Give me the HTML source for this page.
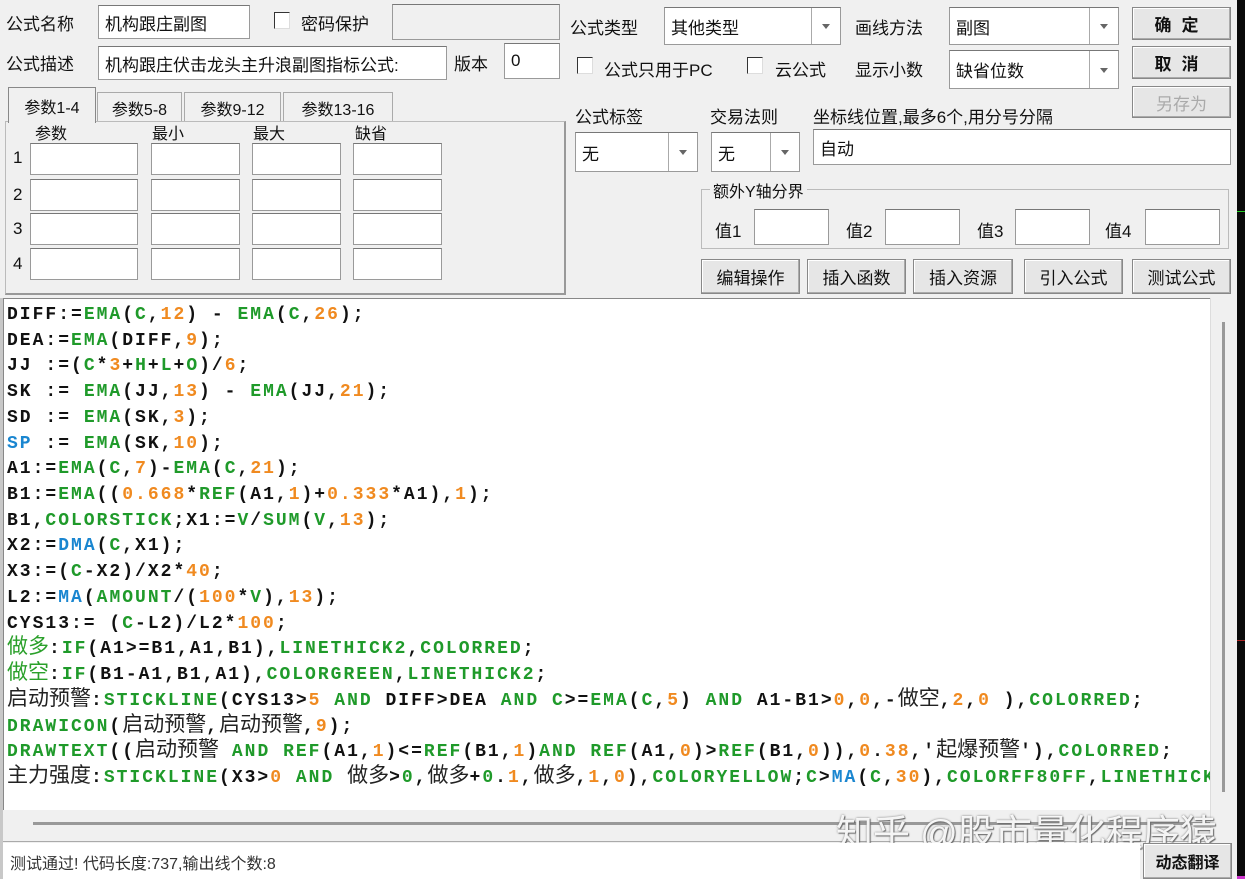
<!DOCTYPE html>
<html><head><meta charset="utf-8"><style>
*{box-sizing:border-box;margin:0;padding:0}
body{width:1245px;height:879px;background:#f0f0f0;position:relative;overflow:hidden;font-family:"Liberation Sans","Noto Sans CJK SC",sans-serif;font-size:17px;color:#111}
.a{position:absolute;white-space:nowrap}
.in{position:absolute;background:#fff;border:1px solid #9a9a9a;border-top-color:#777;padding-left:6px;display:flex;align-items:center;font-size:17px}
.dis{background:#f0f0f0}
.cb{position:absolute;width:16px;height:17px;background:#fff;border:1px solid #333;border-right-color:#ddd;border-bottom-color:#ddd}
.btn{position:absolute;background:#e6e6e6;border:1px solid #888;box-shadow:inset -1px -1px 0 #aaa,inset 1px 1px 0 #fff;display:flex;align-items:center;justify-content:center;font-size:17px}
.dd{position:absolute;top:0;right:0;bottom:0;width:29px;border-left:1px solid #aaa}
.dd:after{content:"";position:absolute;left:10px;top:50%;margin-top:-2px;border:4px solid transparent;border-top:5px solid #666}
.code{position:absolute;left:3px;top:298px;width:1207px;height:512px;background:#fff;border-top:1px solid #888;border-left:1px solid #888;overflow:hidden}
.code pre{position:absolute;left:3px;top:4px;font-family:"Liberation Mono",monospace;font-weight:bold;font-size:18px;letter-spacing:2px;line-height:25.72px;color:#111}
.g{color:#1f9a2a}.o{color:#f08a20}.b{color:#1a86d0}
.z,.zg{font-family:"Liberation Sans","Noto Sans CJK SC",sans-serif;font-weight:normal;font-size:21px;letter-spacing:0;color:#222;line-height:18px}
.zg{color:#2aa02a}
.tab{position:absolute;top:90px;height:32px;border:1px solid #aaa;border-bottom:none;display:flex;align-items:center;justify-content:center;font-size:16px}
</style></head><body>
<div class="a" style="left:6px;top:10px">公式名称</div>
<div class="in" style="left:98px;top:5px;width:152px;height:34px">机构跟庄副图</div>
<div class="cb" style="left:274px;top:12px"></div>
<div class="a" style="left:301px;top:10px">密码保护</div>
<div class="in dis" style="left:392px;top:4px;width:168px;height:36px"></div>
<div class="a" style="left:6px;top:50px">公式描述</div>
<div class="in" style="left:98px;top:46px;width:349px;height:34px">机构跟庄伏击龙头主升浪副图指标公式:</div>
<div class="a" style="left:454px;top:50px">版本</div>
<div class="in" style="left:504px;top:43px;width:56px;height:36px">0</div>
<div class="tab" style="left:97px;width:85px;top:92px;height:30px">参数5-8</div>
<div class="tab" style="left:184px;width:97px;top:92px;height:30px">参数9-12</div>
<div class="tab" style="left:283px;width:110px;top:92px;height:30px">参数13-16</div>
<div class="a" style="left:5px;top:121px;width:561px;height:174px;border:1px solid #bbb;border-right:2px solid #999;border-bottom:2px solid #999"></div>
<div class="tab" style="left:8px;width:88px;top:87px;height:36px;background:#f0f0f0;border-color:#888">参数1-4</div>
<div class="a" style="left:35px;top:120px;font-size:16px">参数</div>
<div class="a" style="left:152px;top:120px;font-size:16px">最小</div>
<div class="a" style="left:253px;top:120px;font-size:16px">最大</div>
<div class="a" style="left:355px;top:120px;font-size:16px">缺省</div>
<div class="a" style="left:13px;top:148px">1</div><div class="a" style="left:13px;top:185px">2</div><div class="a" style="left:13px;top:219px">3</div><div class="a" style="left:13px;top:254px">4</div>
<div class="in" style="left:30px;top:143px;width:108px;height:32px"></div><div class="in" style="left:151px;top:143px;width:89px;height:32px"></div><div class="in" style="left:252px;top:143px;width:89px;height:32px"></div><div class="in" style="left:353px;top:143px;width:89px;height:32px"></div>
<div class="in" style="left:30px;top:179px;width:108px;height:32px"></div><div class="in" style="left:151px;top:179px;width:89px;height:32px"></div><div class="in" style="left:252px;top:179px;width:89px;height:32px"></div><div class="in" style="left:353px;top:179px;width:89px;height:32px"></div>
<div class="in" style="left:30px;top:213px;width:108px;height:32px"></div><div class="in" style="left:151px;top:213px;width:89px;height:32px"></div><div class="in" style="left:252px;top:213px;width:89px;height:32px"></div><div class="in" style="left:353px;top:213px;width:89px;height:32px"></div>
<div class="in" style="left:30px;top:248px;width:108px;height:32px"></div><div class="in" style="left:151px;top:248px;width:89px;height:32px"></div><div class="in" style="left:252px;top:248px;width:89px;height:32px"></div><div class="in" style="left:353px;top:248px;width:89px;height:32px"></div>
<div class="a" style="left:570px;top:14px">公式类型</div>
<div class="in" style="left:664px;top:7px;width:177px;height:38px">其他类型<div class="dd"></div></div>
<div class="a" style="left:855px;top:14px">画线方法</div>
<div class="in" style="left:949px;top:7px;width:170px;height:38px">副图<div class="dd"></div></div>
<div class="btn" style="left:1132px;top:7px;width:99px;height:33px;letter-spacing:10px;font-weight:bold">确定</div>
<div class="btn" style="left:1132px;top:46px;width:99px;height:33px;letter-spacing:10px;font-weight:bold">取消</div>
<div class="btn" style="left:1132px;top:86px;width:99px;height:32px;color:#aaa">另存为</div>
<div class="cb" style="left:577px;top:57px"></div>
<div class="a" style="left:604px;top:56px">公式只用于PC</div>
<div class="cb" style="left:747px;top:57px"></div>
<div class="a" style="left:775px;top:56px">云公式</div>
<div class="a" style="left:855px;top:56px">显示小数</div>
<div class="in" style="left:949px;top:50px;width:170px;height:39px">缺省位数<div class="dd"></div></div>
<div class="a" style="left:575px;top:103px">公式标签</div>
<div class="a" style="left:710px;top:103px">交易法则</div>
<div class="a" style="left:813px;top:103px">坐标线位置,最多6个,用分号分隔</div>
<div class="in" style="left:575px;top:132px;width:123px;height:40px">无<div class="dd"></div></div>
<div class="in" style="left:711px;top:132px;width:89px;height:40px">无<div class="dd"></div></div>
<div class="in" style="left:813px;top:129px;width:418px;height:36px">自动</div>
<div class="a" style="left:701px;top:189px;width:528px;height:60px;border:1px solid #bbb"></div>
<div class="a" style="left:710px;top:178px;background:#f0f0f0;padding:0 3px;font-size:16px">额外Y轴分界</div>
<div class="a" style="left:715px;top:217px">值1</div><div class="in" style="left:754px;top:209px;width:75px;height:36px"></div>
<div class="a" style="left:846px;top:217px">值2</div><div class="in" style="left:885px;top:209px;width:75px;height:36px"></div>
<div class="a" style="left:977px;top:217px">值3</div><div class="in" style="left:1015px;top:209px;width:75px;height:36px"></div>
<div class="a" style="left:1105px;top:217px">值4</div><div class="in" style="left:1145px;top:209px;width:75px;height:36px"></div>
<div class="btn" style="left:701px;top:259px;width:99px;height:35px">编辑操作</div>
<div class="btn" style="left:807px;top:259px;width:99px;height:35px">插入函数</div>
<div class="btn" style="left:913px;top:259px;width:100px;height:35px">插入资源</div>
<div class="btn" style="left:1024px;top:259px;width:99px;height:35px">引入公式</div>
<div class="btn" style="left:1132px;top:259px;width:99px;height:35px">测试公式</div>
<div class="code"><pre>DIFF:=<span class="g">EMA</span>(<span class="g">C</span>,<span class="o">12</span>) - <span class="g">EMA</span>(<span class="g">C</span>,<span class="o">26</span>);
DEA:=<span class="g">EMA</span>(DIFF,<span class="o">9</span>);
JJ :=(<span class="g">C</span>*<span class="o">3</span>+<span class="g">H</span>+<span class="g">L</span>+<span class="g">O</span>)/<span class="o">6</span>;
SK := <span class="g">EMA</span>(JJ,<span class="o">13</span>) - <span class="g">EMA</span>(JJ,<span class="o">21</span>);
SD := <span class="g">EMA</span>(SK,<span class="o">3</span>);
<span class="b">SP</span> := <span class="g">EMA</span>(SK,<span class="o">10</span>);
A1:=<span class="g">EMA</span>(<span class="g">C</span>,<span class="o">7</span>)-<span class="g">EMA</span>(<span class="g">C</span>,<span class="o">21</span>);
B1:=<span class="g">EMA</span>((<span class="o">0.668</span>*<span class="g">REF</span>(A1,<span class="o">1</span>)+<span class="o">0.333</span>*A1),<span class="o">1</span>);
B1,<span class="g">COLORSTICK</span>;X1:=<span class="g">V</span>/<span class="g">SUM</span>(<span class="g">V</span>,<span class="o">13</span>);
X2:=<span class="b">DMA</span>(<span class="g">C</span>,X1);
X3:=(<span class="g">C</span>-X2)/X2*<span class="o">40</span>;
L2:=<span class="b">MA</span>(<span class="g">AMOUNT</span>/(<span class="o">100</span>*<span class="g">V</span>),<span class="o">13</span>);
CYS13:= (<span class="g">C</span>-L2)/L2*<span class="o">100</span>;
<span class="zg">做多</span>:<span class="g">IF</span>(A1&gt;=B1,A1,B1),<span class="g">LINETHICK2</span>,<span class="g">COLORRED</span>;
<span class="zg">做空</span>:<span class="g">IF</span>(B1-A1,B1,A1),<span class="g">COLORGREEN</span>,<span class="g">LINETHICK2</span>;
<span class="z">启动预警</span>:<span class="g">STICKLINE</span>(CYS13&gt;<span class="o">5</span> <span class="g">AND</span> DIFF&gt;DEA <span class="g">AND</span> <span class="g">C</span>&gt;=<span class="g">EMA</span>(<span class="g">C</span>,<span class="o">5</span>) <span class="g">AND</span> A1-B1&gt;<span class="o">0</span>,<span class="o">0</span>,-<span class="z">做空</span>,<span class="o">2</span>,<span class="o">0</span> ),<span class="g">COLORRED</span>;
<span class="g">DRAWICON</span>(<span class="z">启动预警</span>,<span class="z">启动预警</span>,<span class="o">9</span>);
<span class="g">DRAWTEXT</span>((<span class="z">启动预警</span> <span class="g">AND</span> <span class="g">REF</span>(A1,<span class="o">1</span>)&lt;=<span class="g">REF</span>(B1,<span class="o">1</span>)<span class="g">AND</span> <span class="g">REF</span>(A1,<span class="o">0</span>)&gt;<span class="g">REF</span>(B1,<span class="o">0</span>)),<span class="o">0</span>.<span class="o">38</span>,'<span class="z">起爆预警</span>'),<span class="g">COLORRED</span>;
<span class="z">主力强度</span>:<span class="g">STICKLINE</span>(X3&gt;<span class="o">0</span> <span class="g">AND</span> <span class="z">做多</span>&gt;<span class="g">0</span>,<span class="z">做多</span>+<span class="g">0</span>.<span class="o">1</span>,<span class="z">做多</span>,<span class="o">1</span>,<span class="o">0</span>),<span class="g">COLORYELLOW</span>;<span class="g">C</span>&gt;<span class="b">MA</span>(<span class="g">C</span>,<span class="o">30</span>),<span class="g">COLORFF80FF</span>,<span class="g">LINETHICK</span></pre></div>
<div class="a" style="left:1210px;top:298px;width:27px;height:545px;background:#f0f0f0;border-left:1px solid #ddd"></div>
<div class="a" style="left:1222px;top:322px;width:3px;height:470px;background:#999"></div>
<div class="a" style="left:3px;top:810px;width:1207px;height:32px;background:#f0f0f0;border-bottom:1px solid #aaa"></div>
<div class="a" style="left:33px;top:822px;width:1177px;height:3px;background:#999"></div>
<div class="a" style="left:836px;top:803px;font-size:37px;color:rgba(255,255,255,0.92);text-shadow:0 0 2px #777,1px 1px 1px #666">知乎 @股市量化程序猿</div>
<div class="a" style="left:3px;top:843px;width:1137px;height:36px;background:#fff"></div>
<div class="a" style="left:10px;top:850px;font-size:16px;color:#333">测试通过! 代码长度:737,输出线个数:8</div>
<div class="btn" style="left:1143px;top:843px;width:89px;height:36px;font-size:16px;font-weight:bold">动态翻译</div>
<div class="a" style="left:0;top:298px;width:3px;height:581px;background:#c8c8c8"></div>
<div class="a" style="left:1237px;top:0;width:8px;height:879px;background:#0a0a0a"></div>
<div class="a" style="left:1237px;top:211px;width:8px;height:1px;background:#2c2"></div>
<div class="a" style="left:1237px;top:640px;width:8px;height:1px;background:#a22"></div>
<div class="a" style="left:1237px;top:876px;width:8px;height:3px;background:#c3c"></div>
</body></html>
